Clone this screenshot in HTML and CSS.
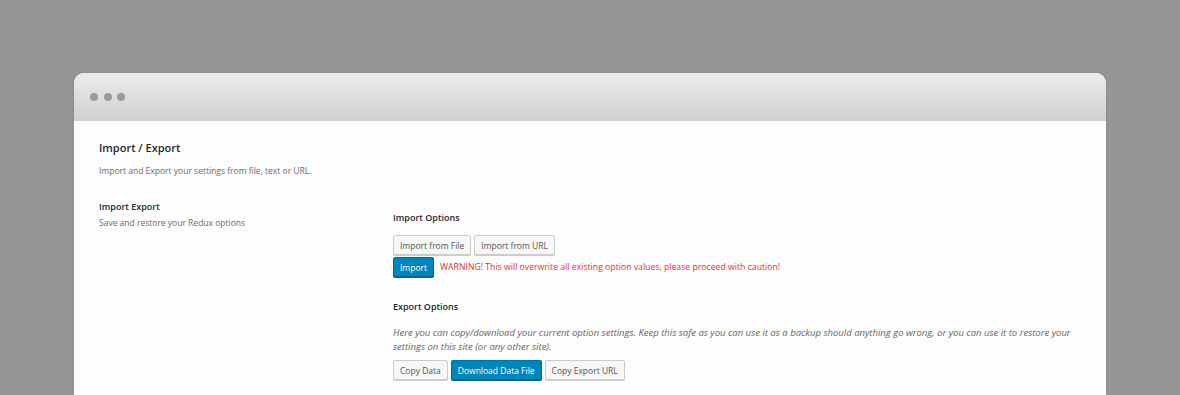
FILE: index.html
```html
<!DOCTYPE html>
<html>
<head>
<meta charset="utf-8">
<link rel="stylesheet" href="styles.css">
</head>
<body>
<div class="window">
  <div class="titlebar">
    <span class="dot"></span><span class="dot"></span><span class="dot"></span>
  </div>
  <div class="content">
    <h1 class="page-title">Import / Export</h1>
    <p class="page-desc">Import and Export your settings from file, text or URL.</p>
    <div class="field-row">
      <div class="field-label">
        <div class="label-title">Import Export</div>
        <div class="label-desc">Save and restore your Redux options</div>
      </div>
      <div class="field-body">
        <h2 class="section-title">Import Options</h2>
        <div class="btn-row">
          <button class="btn">Import from File</button>
          <button class="btn">Import from URL</button>
        </div>
        <div class="btn-row">
          <button class="btn btn-primary">Import</button>
          <span class="warning">WARNING! This will overwrite all existing option values, please proceed with caution!</span>
        </div>
        <h2 class="section-title export-title">Export Options</h2>
        <p class="export-desc">Here you can copy/download your current option settings. Keep this safe as you can use it as a backup should anything go wrong, or you can use it to restore your settings on this site (or any other site).</p>
        <div class="btn-row">
          <button class="btn">Copy Data</button>
          <button class="btn btn-primary">Download Data File</button>
          <button class="btn">Copy Export URL</button>
        </div>
      </div>
    </div>
  </div>
</div>
</body>
</html>
```
FILE: styles.css
```css
* { box-sizing: border-box; }
html, body { margin: 0; padding: 0; }
body {
  background: #969696;
  height: 395px;
  overflow: hidden;
  padding: 73px 74px 0 74px;
  font-family: "Open Sans", "Noto Sans", sans-serif;
}
.window {
  width: 1032px;
  height: 322px;
  border-radius: 10px 10px 0 0;
  overflow: hidden;
  background: #fdfdfd;
  box-shadow: 0 0 3px rgba(0,0,0,0.15);
}
.titlebar {
  height: 48px;
  background: linear-gradient(#ececec, #d0d0d0);
  display: flex;
  align-items: center;
  gap: 5.5px;
  padding-left: 16px;
}
.dot {
  width: 8px;
  height: 8px;
  border-radius: 50%;
  background: #9b9b9b;
}
.content {
  padding: 20px 25px 0 25px;
  color: #555;
}
.page-title {
  margin: 0;
  font-size: 11px;
  line-height: 14px;
  font-weight: 600;
  color: #23282d;
}
.page-desc {
  margin: 9px 0 0 0;
  font-size: 8.5px;
  line-height: 13px;
  color: #6b6b6b;
}
.field-row {
  display: grid;
  grid-template-columns: 294px 1fr;
  margin-top: 23px;
}
.label-title {
  font-size: 9px;
  line-height: 14px;
  font-weight: 600;
  color: #23282d;
}
.label-desc {
  margin-top: 2px;
  font-size: 8.5px;
  line-height: 13px;
  color: #6b6b6b;
}
.field-body {
  padding-top: 11px;
}
.section-title {
  margin: 0;
  font-size: 9px;
  line-height: 14px;
  font-weight: 600;
  color: #23282d;
}
.btn-row {
  display: flex;
  align-items: center;
  gap: 3px;
  margin-top: 2px;
}
.section-title + .btn-row { margin-top: 10px; }
.btn {
  height: 20px;
  padding: 0 6px;
  font-family: inherit;
  font-size: 8.5px;
  color: #555;
  background: #f7f7f7;
  border: 1px solid #cccccc;
  border-radius: 2px;
  box-shadow: 0 1px 0 #cccccc;
  cursor: pointer;
}
.btn-primary {
  background: #0085ba;
  border-color: #0073aa #006799 #006799;
  color: #ffffff;
  box-shadow: 0 1px 0 #006799;
}
.warning {
  margin-left: 3px;
  font-size: 8.7px;
  color: #dc3232;
}
.export-title { margin-top: 23px; }
.export-desc {
  margin: 12px 0 0 0;
  font-size: 9.5px;
  line-height: 13.5px;
  font-style: italic;
  color: #666;
  max-width: 690px;
}
.export-desc + .btn-row { margin-top: 7px; }
```
